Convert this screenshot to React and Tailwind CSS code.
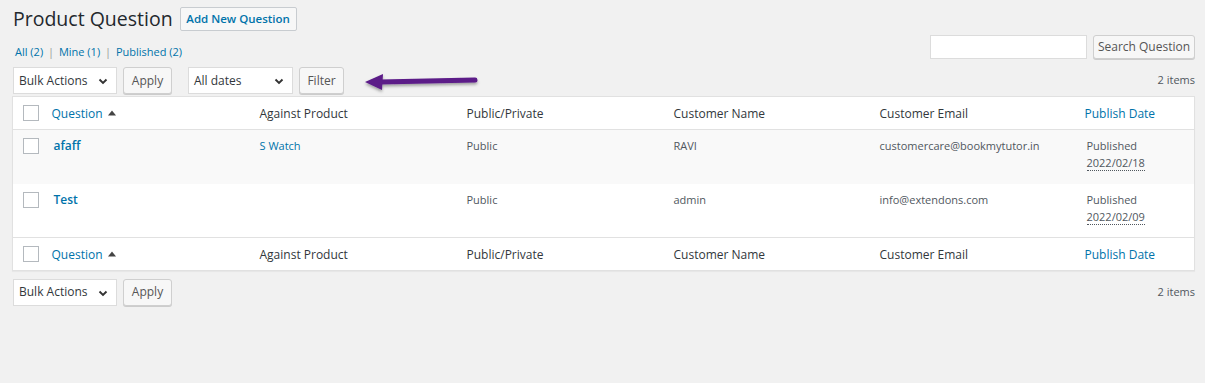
import React from "react";

const font = { fontFamily: '"Open Sans", "Noto Sans", sans-serif' };

function Chevron() {
  return (
    <svg width="10" height="7" viewBox="0 0 10 7" className="absolute right-[8px] top-[10px]">
      <path d="M1.5 1.5 L5 5 L8.5 1.5" fill="none" stroke="#333" strokeWidth="1.9" />
    </svg>
  );
}

function Select({ label, w }) {
  return (
    <div className={`relative h-[27px] ${w} border border-[#dcdcdc] bg-white flex items-center pl-[5px] text-[12px] text-[#32373c]`}>
      {label}
      <Chevron />
    </div>
  );
}

function Btn({ children, className = "" }) {
  return (
    <div className={`flex items-center justify-center border border-[#cfcfcf] bg-[#f7f7f7] rounded-[3px] shadow-[0_1px_0_#cccccc] text-[12px] text-[#555] ${className}`}>
      {children}
    </div>
  );
}

function Cb() {
  return <div className="w-[16px] h-[16px] border border-[#b4b9be] bg-white" />;
}

const cols = ["w-[29px]", "w-[208px]", "w-[207px]", "w-[207px]", "w-[206px]", "w-[205px]", ""];

function HeadRow({ top }) {
  return (
    <tr className={`h-[33px] ${top ? "border-b" : "border-t"} border-[#e1e1e1] text-[12px]`}>
      <td className="pl-[10px] align-middle"><Cb /></td>
      <td className="pl-[10px] align-middle pt-[2px] text-[#0073aa]">
        <span className="inline-flex items-center gap-[5px]">Question
          <svg width="8" height="6" viewBox="0 0 8 6" className="mb-[3px]"><path d="M0 5.5 L4 0.5 L8 5.5Z" fill="#444" /></svg>
        </span>
      </td>
      <td className="pl-[10px] align-middle pt-[2px] text-[#32373c]">Against Product</td>
      <td className="pl-[10px] align-middle pt-[2px] text-[#32373c]">Public/Private</td>
      <td className="pl-[10px] align-middle pt-[2px] text-[#32373c]">Customer Name</td>
      <td className="pl-[10px] align-middle pt-[2px] text-[#32373c]">Customer Email</td>
      <td className="pl-[10px] align-middle pt-[2px] text-[#0073aa]">Publish Date</td>
    </tr>
  );
}

function DataRow({ q, prod, vis, name, email, date, bg }) {
  return (
    <tr className={`h-[54px] ${bg} text-[11px]`}>
      <td className="pl-[10px] align-top pt-[8px]"><Cb /></td>
      <td className="pl-[12px] align-top pt-[7px] text-[#0073aa] font-semibold text-[12px]">{q}</td>
      <td className="pl-[10px] align-top pt-[8px] text-[#0073aa]">{prod}</td>
      <td className="pl-[10px] align-top pt-[8px] text-[#50575e]">{vis}</td>
      <td className="pl-[10px] align-top pt-[8px] text-[#50575e]">{name}</td>
      <td className="pl-[10px] align-top pt-[8px] text-[#50575e]">{email}</td>
      <td className="pl-[12px] align-top pt-[7px] text-[#50575e] leading-[17px]">
        <div>Published</div>
        <div><span className="border-b border-dotted border-[#50575e]">{date}</span></div>
      </td>
    </tr>
  );
}

export default function App() {
  return (
    <div style={font} className="w-[1205px] h-[383px] bg-[#f1f1f1] text-[12px] text-[#444] overflow-hidden">
      <div className="pl-[12px] pr-[10px]">
        <div className="flex items-center h-[36px] pt-[1px]">
          <h1 className="text-[19.5px] text-[#23282d] pl-[1px] leading-none">Product Question</h1>
          <div className="ml-[7px] h-[24px] w-[117px] flex items-center justify-center border border-[#c8ccd0] bg-[#f7f7f7] rounded-[2px] text-[#0073aa] font-semibold text-[11.5px]">Add New Question</div>
        </div>
        <div className="flex justify-between items-start h-[31px]">
          <div className="pt-[8px] pl-[3px] text-[11px] text-[#0073aa]">
            All (2) <span className="text-[#999] px-[2px]">|</span> Mine (1) <span className="text-[#999] px-[2px]">|</span> Published (2)
          </div>
          <div className="flex items-center gap-[6px] -mt-[1px]">
            <div className="w-[157px] h-[24px] border border-[#dcdcdc] bg-white" />
            <Btn className="h-[24px] w-[102px] text-[11.5px]">Search Question</Btn>
          </div>
        </div>
        <div className="flex items-center h-[27px] relative">
          <div className="flex items-center pl-[1px]">
            <Select label="Bulk Actions" w="w-[104px]" />
            <Btn className="ml-[6px] h-[27px] w-[49px]">Apply</Btn>
            <Select label="All dates" w="w-[105px] ml-[16px]" />
            <Btn className="ml-[6px] h-[27px] w-[45px]">Filter</Btn>
          </div>
          <svg className="absolute left-[348px] top-[2px]" width="125" height="26" viewBox="0 0 125 26">
            <defs>
              <filter id="sh" x="-10%" y="-50%" width="120%" height="200%">
                <feDropShadow dx="0" dy="2" stdDeviation="1.5" floodColor="#000" floodOpacity="0.35" />
              </filter>
            </defs>
            <g filter="url(#sh)">
              <path d="M20 13 L115 11" stroke="#5b1b88" strokeWidth="5" strokeLinecap="round" fill="none" />
              <path d="M5 13 L23 5 L22 21 Z" fill="#5b1b88" />
            </g>
          </svg>
          <div className="ml-auto text-[11px] text-[#50575e]">2 items</div>
        </div>
        <table className="mt-[2px] w-[1183px] table-fixed border-collapse bg-white border border-[#e1e1e1] shadow-[0_1px_1px_rgba(0,0,0,0.04)]">
          <colgroup>
            {cols.map((c, i) => <col key={i} className={c} />)}
          </colgroup>
          <thead><HeadRow top /></thead>
          <tbody>
            <DataRow q="afaff" prod="S Watch" vis="Public" name="RAVI" email="customercare@bookmytutor.in" date="2022/02/18" bg="bg-[#f9f9f9]" />
            <DataRow q="Test" prod="" vis="Public" name="admin" email="info@extendons.com" date="2022/02/09" bg="bg-white" />
          </tbody>
          <tfoot><HeadRow /></tfoot>
        </table>
        <div className="flex items-center h-[26px] mt-[8px]">
          <div className="flex items-center pl-[1px]">
            <Select label="Bulk Actions" w="w-[104px]" />
            <Btn className="ml-[6px] h-[27px] w-[49px]">Apply</Btn>
          </div>
          <div className="ml-auto text-[11px] text-[#50575e]">2 items</div>
        </div>
      </div>
    </div>
  );
}
